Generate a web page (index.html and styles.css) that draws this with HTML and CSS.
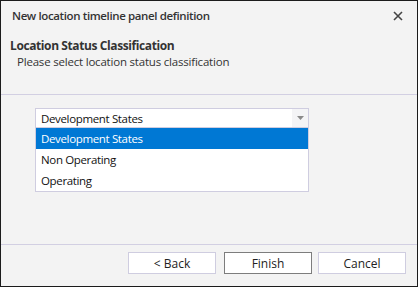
FILE: index.html
```html
<!DOCTYPE html>
<html lang="en">
<head>
    <meta charset="UTF-8">
    <title>New location timeline panel definition</title>
    <link rel="stylesheet" href="styles.css">
</head>
<body>
    <div class="window">
        <div class="titlebar">
            <span class="title">New location timeline panel definition</span>
            <span class="close">
                <svg width="10" height="10" viewBox="0 0 10 10">
                    <path d="M1 1 L9 9 M9 1 L1 9" stroke="#444" stroke-width="1.6"/>
                </svg>
            </span>
        </div>

        <div class="header">
            <div class="header-title">Location Status Classification</div>
            <div class="header-sub">Please select location status classification</div>
        </div>

        <div class="content">
            <div class="combo">
                <div class="combo-edit">
                    <span class="combo-text">Development States</span>
                    <span class="combo-btn">
                        <svg width="7" height="4" viewBox="0 0 7 4">
                            <path d="M0 0 L7 0 L3.5 4 Z" fill="#8a8a8a"/>
                        </svg>
                    </span>
                </div>
                <div class="combo-list">
                    <div class="item selected">Development States</div>
                    <div class="item">Non Operating</div>
                    <div class="item">Operating</div>
                </div>
            </div>
        </div>

        <div class="footer">
            <button class="btn">&lt; Back</button>
            <button class="btn default">Finish</button>
            <button class="btn">Cancel</button>
        </div>
    </div>
</body>
</html>
```

FILE: styles.css
```css
body {
    margin: 0;
    font-family: 'Open Sans', 'Noto Sans', sans-serif;
    font-size: 12px;
    color: #222;
}

.window {
    width: 418px;
    height: 287px;
    box-sizing: border-box;
    border: 1px solid #1b1b1b;
    background-color: #f3f3f3;
    display: flex;
    flex-direction: column;
}

.titlebar {
    height: 29px;
    display: flex;
    align-items: center;
    justify-content: space-between;
    padding: 0 14px 0 11px;
}

.title {
    font-size: 11.5px;
    font-weight: 600;
    color: #333;
    letter-spacing: -0.38px;
}

.close {
    display: flex;
}

.header {
    height: 65px;
    padding: 8px 9px 0;
    box-sizing: border-box;
    border-bottom: 1px solid #d2cfe2;
}

.header-title {
    font-weight: 700;
    color: #333;
    letter-spacing: -0.4px;
    line-height: 16px;
}

.header-sub {
    padding-left: 7px;
    color: #333;
    line-height: 15px;
    font-size: 11.5px;
    letter-spacing: -0.2px;
}

.content {
    flex: 1;
    padding: 13px 0 0 34px;
    border-bottom: 1px solid #d2cfe2;
}

.combo {
    width: 274px;
}

.combo-edit {
    height: 20px;
    border: 1px solid #cfcde0;
    background-color: #fff;
    display: flex;
    align-items: center;
    box-sizing: border-box;
}

.combo-text {
    flex: 1;
    padding-left: 5px;
    color: #111;
    font-size: 11.5px;
    letter-spacing: -0.35px;
}

.combo-btn {
    width: 16px;
    height: 18px;
    display: flex;
    align-items: center;
    justify-content: center;
    background-color: #f4f4f6;
}

.combo-list {
    border: 1px solid #cfcde0;
    border-top: none;
    background-color: #fff;
}

.item {
    height: 21px;
    line-height: 22px;
    padding-left: 5px;
    color: #111;
    font-size: 11.5px;
    letter-spacing: -0.35px;
}

.item.selected {
    background-color: #0078d4;
    color: #fff;
}

.footer {
    height: 41px;
    display: flex;
    justify-content: flex-end;
    align-items: flex-start;
    padding: 7px 11px 0 0;
    box-sizing: border-box;
}

.btn {
    width: 88px;
    height: 22px;
    background-color: #fff;
    border: 1px solid #cfcde0;
    font-family: 'Open Sans', 'Noto Sans', sans-serif;
    font-size: 12px;
    color: #222;
    padding: 0;
    margin-left: 6px;
}

.btn:first-child {
    margin-left: 0;
}

.btn.default {
    border-color: #7d7d7d;
    margin-left: 8px;
}
```
